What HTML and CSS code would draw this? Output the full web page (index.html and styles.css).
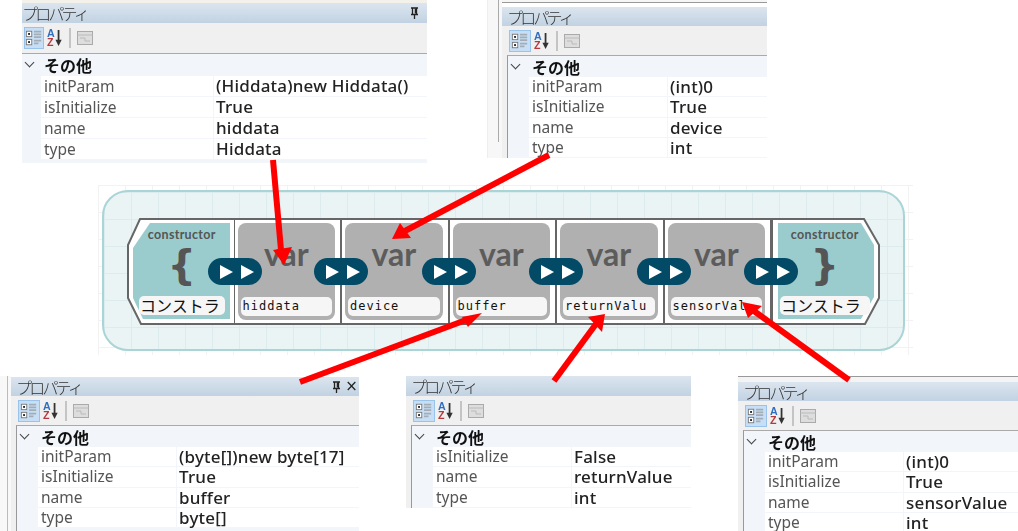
FILE: index.html
```html
<!DOCTYPE html>
<html lang="ja">

<head>
    <meta charset="UTF-8">
    <meta name="viewport" content="width=device-width, initial-scale=1.0">
    <title>コンストラクタ プロパティ</title>
    <link rel="stylesheet" href="styles.css">
</head>

<body>
    <svg class="defs" width="0" height="0">
        <symbol id="icon-category" viewBox="0 0 20 20">
            <rect x="1.500" y="2.500" width="6" height="6" fill="#fff" stroke="#777" />
            <rect x="3.500" y="4.500" width="2" height="2" fill="#111" />
            <rect x="1.500" y="11.500" width="6" height="6" fill="#fff" stroke="#777" />
            <rect x="3.500" y="13.500" width="2" height="2" fill="#111" />
            <path d="M10 3h8M10 6h8M10 9h8M10 13h8M10 16h5" stroke="#a4adb6" stroke-width="2" />
        </symbol>
        <symbol id="icon-sort" viewBox="0 0 18 20">
            <text x="0" y="9" class="sort-a">A</text>
            <text x="0" y="19.500" class="sort-z">Z</text>
            <path d="M13 1v14" stroke="#333" stroke-width="2" />
            <path d="M9.500 12h7l-3.500 7z" fill="#333" />
        </symbol>
        <symbol id="icon-pages" viewBox="0 0 16 16">
            <rect x="0.500" y="1.500" width="15" height="13" fill="#ddd" stroke="#aaa" />
            <path d="M0.500 5h15M3 8h5v3h5" fill="none" stroke="#bbb" />
        </symbol>
        <symbol id="icon-pin" viewBox="0 0 9 12">
            <path d="M1 1h7M2.500 1v6M6.500 1v6M1 7.500h7M4.500 8v4" fill="none" stroke="#222" stroke-width="1.300" />
            <path d="M5.500 1.500v5" stroke="#222" stroke-width="1.500" />
        </symbol>
    </svg>

    <!-- window edges that show behind the panels -->
    <div class="edge edge-top1"></div>
    <div class="edge edge-top2"></div>
    <div class="edge edge-left2"></div>
    <div class="edge edge-left3"></div>
    <div class="edge edge-top5"></div>

    <div class="panel p1">
        <div class="title">
            <span class="title-text">プロパティ</span>
            <svg class="pin" width="9" height="12"><use href="#icon-pin" /></svg>
        </div>
        <div class="toolbar">
            <span class="tool active"><svg width="18" height="18"><use href="#icon-category" /></svg></span>
            <svg class="tool" width="16" height="20"><use href="#icon-sort" /></svg>
            <span class="sep"></span>
            <svg class="tool" width="16" height="16"><use href="#icon-pages" /></svg>
        </div>
        <div class="grid">
            <div class="cat"><span class="chev"></span>その他</div>
            <div class="row"><span class="key">initParam</span><span class="val">(Hiddata)new Hiddata()</span></div>
            <div class="row"><span class="key">isInitialize</span><span class="val">True</span></div>
            <div class="row"><span class="key">name</span><span class="val">hiddata</span></div>
            <div class="row"><span class="key">type</span><span class="val">Hiddata</span></div>
            <div class="cat">基本設定</div>
        </div>
    </div>

    <div class="panel p2">
        <div class="title"><span class="title-text">プロパティ</span></div>
        <div class="toolbar">
            <span class="tool active"><svg width="18" height="18"><use href="#icon-category" /></svg></span>
            <svg class="tool" width="16" height="20"><use href="#icon-sort" /></svg>
            <span class="sep"></span>
            <svg class="tool" width="16" height="16"><use href="#icon-pages" /></svg>
        </div>
        <div class="grid">
            <div class="cat"><span class="chev"></span>その他</div>
            <div class="row"><span class="key">initParam</span><span class="val">(int)0</span></div>
            <div class="row"><span class="key">isInitialize</span><span class="val">True</span></div>
            <div class="row"><span class="key">name</span><span class="val">device</span></div>
            <div class="row"><span class="key">type</span><span class="val">int</span></div>
            <div class="cat">基本設定</div>
        </div>
    </div>

    <div class="panel p3">
        <div class="title">
            <span class="title-text">プロパティ</span>
            <svg class="pin" width="9" height="12"><use href="#icon-pin" /></svg>
            <span class="close">×</span>
        </div>
        <div class="toolbar">
            <span class="tool active"><svg width="18" height="18"><use href="#icon-category" /></svg></span>
            <svg class="tool" width="16" height="20"><use href="#icon-sort" /></svg>
            <span class="sep"></span>
            <svg class="tool" width="16" height="16"><use href="#icon-pages" /></svg>
        </div>
        <div class="grid">
            <div class="cat"><span class="chev"></span>その他</div>
            <div class="row"><span class="key">initParam</span><span class="val">(byte[])new byte[17]</span></div>
            <div class="row"><span class="key">isInitialize</span><span class="val">True</span></div>
            <div class="row"><span class="key">name</span><span class="val">buffer</span></div>
            <div class="row"><span class="key">type</span><span class="val">byte[]</span></div>
            <div class="cat">基本設定</div>
        </div>
    </div>

    <div class="panel p4">
        <div class="title"><span class="title-text">プロパティ</span></div>
        <div class="toolbar">
            <span class="tool active"><svg width="18" height="18"><use href="#icon-category" /></svg></span>
            <svg class="tool" width="16" height="20"><use href="#icon-sort" /></svg>
            <span class="sep"></span>
            <svg class="tool" width="16" height="16"><use href="#icon-pages" /></svg>
        </div>
        <div class="grid">
            <div class="cat"><span class="chev"></span>その他</div>
            <div class="row"><span class="key">isInitialize</span><span class="val">False</span></div>
            <div class="row"><span class="key">name</span><span class="val">returnValue</span></div>
            <div class="row"><span class="key">type</span><span class="val">int</span></div>
        </div>
    </div>

    <div class="panel p5">
        <div class="title"><span class="title-text">プロパティ</span></div>
        <div class="toolbar">
            <span class="tool active"><svg width="18" height="18"><use href="#icon-category" /></svg></span>
            <svg class="tool" width="16" height="20"><use href="#icon-sort" /></svg>
            <span class="sep"></span>
            <svg class="tool" width="16" height="16"><use href="#icon-pages" /></svg>
        </div>
        <div class="grid">
            <div class="cat"><span class="chev"></span>その他</div>
            <div class="row"><span class="key">initParam</span><span class="val">(int)0</span></div>
            <div class="row"><span class="key">isInitialize</span><span class="val">True</span></div>
            <div class="row"><span class="key">name</span><span class="val">sensorValue</span></div>
            <div class="row"><span class="key">type</span><span class="val">int</span></div>
        </div>
    </div>

    <div class="canvas">
        <div class="loop">
            <div class="chain">
                <div class="block end">
                    <svg class="end-shape" width="108" height="107" viewBox="0 0 108 107">
                        <path d="M13 1H108V106H14L1 80V27z" fill="#fff" stroke="#666" stroke-width="2" />
                        <path d="M23 5H103V101H16L6 80V30z" fill="#9accce" />
                    </svg>
                    <div class="end-name">constructor</div>
                    <div class="brace">{</div>
                    <div class="label jp">コンストラ</div>
                    <span class="plug"><i></i><i></i></span>
                </div>
                <div class="block var">
                    <div class="var-body">
                        <div class="var-name">var</div>
                        <div class="label">hiddata</div>
                    </div>
                    <span class="plug"><i></i><i></i></span>
                </div>
                <div class="block var">
                    <div class="var-body">
                        <div class="var-name">var</div>
                        <div class="label">device</div>
                    </div>
                    <span class="plug"><i></i><i></i></span>
                </div>
                <div class="block var">
                    <div class="var-body">
                        <div class="var-name">var</div>
                        <div class="label">buffer</div>
                    </div>
                    <span class="plug"><i></i><i></i></span>
                </div>
                <div class="block var">
                    <div class="var-body">
                        <div class="var-name">var</div>
                        <div class="label">returnValu</div>
                    </div>
                    <span class="plug"><i></i><i></i></span>
                </div>
                <div class="block var">
                    <div class="var-body">
                        <div class="var-name">var</div>
                        <div class="label">sensorVal</div>
                    </div>
                    <span class="plug"><i></i><i></i></span>
                </div>
                <div class="block end right">
                    <svg class="end-shape" width="108" height="107" viewBox="0 0 108 107">
                        <path d="M0 1H92L107 27V80L93 106H0z" fill="#fff" stroke="#666" stroke-width="2" />
                        <path d="M6 5H89L102 27V79L89 101H6z" fill="#9accce" />
                    </svg>
                    <div class="end-name">constructor</div>
                    <div class="brace">}</div>
                    <div class="label jp">コンストラ</div>
                </div>
            </div>
        </div>
    </div>

    <!-- red arrows from each panel to its block -->
    <svg class="arrows" width="1018" height="531" viewBox="0 0 1018 531">
        <g stroke="#f00" stroke-width="6" fill="#f00">
            <path d="M273 160L281 250" />
            <path d="M284 265L273 250L292 247z" stroke="none" />
            <path d="M549 155L403 232" />
            <path d="M392 239L400 223L411 238z" stroke="none" />
            <path d="M300 382L466 320" />
            <path d="M482 313L462 317L468 327z" stroke="none" />
            <path d="M554 381L596 324" />
            <path d="M605 314L588 317L602 332z" stroke="none" />
            <path d="M849 380L754 311" />
            <path d="M742 302L762 306L748 318z" stroke="none" />
        </g>
    </svg>
</body>

</html>
```

FILE: styles.css
```css
* {
    box-sizing: border-box;
    margin: 0;
    padding: 0;
}

html,
body {
    height: 100%;
    overflow: hidden;
}

body {
    background-color: #fff;
    position: relative;
    font-family: "Noto Sans", "Noto Sans CJK JP", sans-serif;
}

.defs {
    position: absolute;
}

.sort-a,
.sort-z {
    font-family: "Liberation Sans", sans-serif;
    font-size: 12px;
    font-weight: bold;
}

.sort-a {
    fill: #2f6fc0;
}

.sort-z {
    fill: #b5393c;
}

.edge {
    position: absolute;
}

.edge-top1 {
    left: 22px;
    top: 0;
    width: 405px;
    height: 3px;
    background: #f3f1ea;
}

.edge-top2 {
    left: 502px;
    top: 0;
    width: 265px;
    height: 3px;
    border-bottom: 1px solid #999;
    background: #f6f6f6;
}

.edge-left2 {
    left: 487px;
    top: 0;
    width: 15px;
    height: 158px;
    background: #f7f7f7;
    border-left: 1px solid #eee;
    background-image: linear-gradient(#aaa, #aaa);
    background-size: 1px 142px;
    background-position: 10px 0;
    background-repeat: no-repeat;
}

.edge-left3 {
    left: 0;
    top: 376px;
    width: 11px;
    height: 155px;
    background: #f8f8f8;
    background-image: linear-gradient(#bbb, #bbb);
    background-size: 1px 155px;
    background-position: 7px 0;
    background-repeat: no-repeat;
}

.edge-top5 {
    left: 738px;
    top: 376px;
    width: 280px;
    height: 6px;
    border-top: 1px solid #999;
    background: #f4f4f4;
}

/* property panels sit loose on the page like pasted screenshots */
.panel {
    --inset: 5px;
    --gutter: 21px;
    --key: 139px;
    --title: 19px;
    --tool: 29px;
    --row: 20.300px;
    --cat: 21px;
    position: absolute;
    overflow: hidden;
    background-color: #f0f0f0;
    filter: blur(0.35px);
}

.p1 {
    --inset: 0px;
    --gutter: 19px;
    --key: 173px;
    --title: 20px;
    --tool: 30px;
    --row: 21px;
    --cat: 22px;
    left: 22px;
    top: 3px;
    width: 405px;
    height: 160px;
}

.p2 {
    left: 502px;
    top: 7px;
    width: 265px;
    height: 151px;
}

.p3 {
    left: 11px;
    top: 377px;
    width: 348px;
    height: 154px;
}

.p4 {
    --title: 20px;
    left: 406px;
    top: 376px;
    width: 285px;
    height: 132px;
}

.p5 {
    left: 738px;
    top: 382px;
    width: 280px;
    height: 149px;
}

.title {
    display: flex;
    align-items: center;
    height: var(--title);
    background: linear-gradient(#dbe5ef, #c2d2e2);
    color: #333;
    line-height: 1;
}

.title-text {
    flex: 1;
    padding-left: 5px;
    font-family: "Noto Sans CJK JP", sans-serif;
    font-size: 16px;
    font-weight: 300;
    letter-spacing: -2.800px;
    white-space: nowrap;
}

.p1 .title-text {
    padding-left: 0;
}

.pin {
    display: block;
    margin-right: 4px;
}

.p1 .pin {
    margin-right: 8px;
}

.close {
    width: 13px;
    margin-right: 1px;
    color: #222;
    font-family: "DejaVu Sans", sans-serif;
    font-size: 15px;
    text-align: center;
}

.toolbar {
    display: flex;
    align-items: center;
    gap: 3px;
    height: var(--tool);
    padding-left: calc(var(--inset) + 2px);
}

.tool {
    display: block;
}

.active {
    display: flex;
    align-items: center;
    justify-content: center;
    width: 22px;
    height: 22px;
    background: #c7dff6;
    border: 1px solid #99c3ea;
}

.p1 .active {
    width: 20px;
}

.sep {
    width: 2px;
    height: 20px;
    margin: 0 3px;
    background: #c4c4c4;
}

.grid {
    margin-left: var(--inset);
    background-color: #f2f6fb;
    border-left: 1px solid #999;
    border-top: 1px solid #aaa;
    height: 200px;
}

.p1 .grid {
    border-left: 0;
}

.cat {
    display: flex;
    align-items: center;
    height: var(--cat);
    padding-left: calc(var(--gutter) + 3px);
    position: relative;
    color: #111;
    font-family: "Noto Sans CJK JP", sans-serif;
    font-size: 16px;
    font-weight: 700;
    line-height: 1;
}

.chev {
    position: absolute;
    left: 4px;
    top: 5px;
    width: 7px;
    height: 7px;
    border-right: 1.500px solid #444;
    border-bottom: 1.500px solid #444;
    transform: rotate(45deg);
}

.row {
    display: grid;
    grid-template-columns: var(--key) 1fr;
    height: var(--row);
    margin-left: var(--gutter);
    background-color: #fff;
    border-bottom: 1px solid #f2f5f9;
    line-height: calc(var(--row) - 1px);
    white-space: nowrap;
}

.key {
    padding-left: 3px;
    border-right: 1px solid #f2f5f9;
    color: #555;
    font-size: 15.500px;
}

.val {
    padding-left: 2px;
    color: #222;
    font-size: 17px;
    font-weight: 500;
    letter-spacing: 0.200px;
}

/* block diagram */
.canvas {
    position: absolute;
    left: 98px;
    top: 185px;
    width: 815px;
    height: 170px;
    padding: 5px 8px 4px 4px;
    background-color: #fff;
    background-image: linear-gradient(#f2f2f2 1px, transparent 1px), linear-gradient(90deg, #f2f2f2 1px, transparent 1px);
    background-size: 27px 27px;
}

.loop {
    height: 161px;
    padding: 26px 0 0 23px;
    border: 2px solid #a9d5d6;
    border-radius: 26px;
    background-color: #eaf4f5;
    background-image: linear-gradient(#dcebee 1px, transparent 1px), linear-gradient(90deg, #dcebee 1px, transparent 1px);
    background-size: 27px 27px;
}

.chain {
    display: flex;
    width: 752px;
    height: 107px;
}

.block {
    position: relative;
    flex: 0 0 107.500px;
}

.var {
    padding: 3px 5px 3px 3px;
    background-color: #fff;
    border-top: 2px solid #666;
    border-bottom: 2px solid #666;
    border-right: 2px solid #666;
}

.var-body {
    display: flex;
    flex-direction: column;
    justify-content: flex-end;
    height: 97px;
    padding: 0 3px 4px;
    border-radius: 8px;
    background-color: #b0b0b0;
}

.var-name {
    margin-bottom: 23px;
    color: #5c5c5c;
    font-family: Lato, sans-serif;
    font-size: 32px;
    font-weight: 700;
    line-height: 40px;
    text-align: center;
}

.label {
    height: 19px;
    padding-left: 2px;
    border-radius: 5px;
    background-color: #f6f6f6;
    color: #111;
    font-family: "DejaVu Sans Mono", monospace;
    font-size: 12px;
    letter-spacing: 1px;
    line-height: 19px;
    white-space: nowrap;
    overflow: hidden;
}

.end {
    display: flex;
    flex-direction: column;
    align-items: center;
    padding: 10px 10px 8px 12px;
}

.end.right {
    padding: 10px 10px 8px 8px;
}

.end-shape {
    position: absolute;
    left: 0;
    top: 0;
}

.end-name {
    position: relative;
    color: #555;
    font-family: Lato, sans-serif;
    font-size: 12.500px;
    font-weight: 700;
    letter-spacing: 0.300px;
    line-height: 14px;
}

.brace {
    position: relative;
    height: 49px;
    color: #555;
    font-family: "DejaVu Sans", sans-serif;
    font-size: 40px;
    font-weight: 700;
    line-height: 46px;
}

.label.jp {
    position: relative;
    align-self: stretch;
    margin-top: 5px;
    padding-left: 1px;
    font-family: "Noto Sans CJK JP", sans-serif;
    font-size: 16px;
    letter-spacing: 0;
    line-height: 19px;
}

.plug {
    position: absolute;
    right: -27px;
    top: 40px;
    z-index: 2;
    display: flex;
    align-items: center;
    justify-content: center;
    gap: 8px;
    width: 54px;
    height: 27px;
    padding-left: 4px;
    border-radius: 14px;
    background-color: #034a66;
}

.var .plug {
    top: 38px;
    right: -28px;
}

.plug i {
    width: 0;
    height: 0;
    border-left: 13px solid #fff;
    border-top: 7px solid transparent;
    border-bottom: 7px solid transparent;
}

.arrows {
    position: absolute;
    left: 0;
    top: 0;
    z-index: 3;
}
```
